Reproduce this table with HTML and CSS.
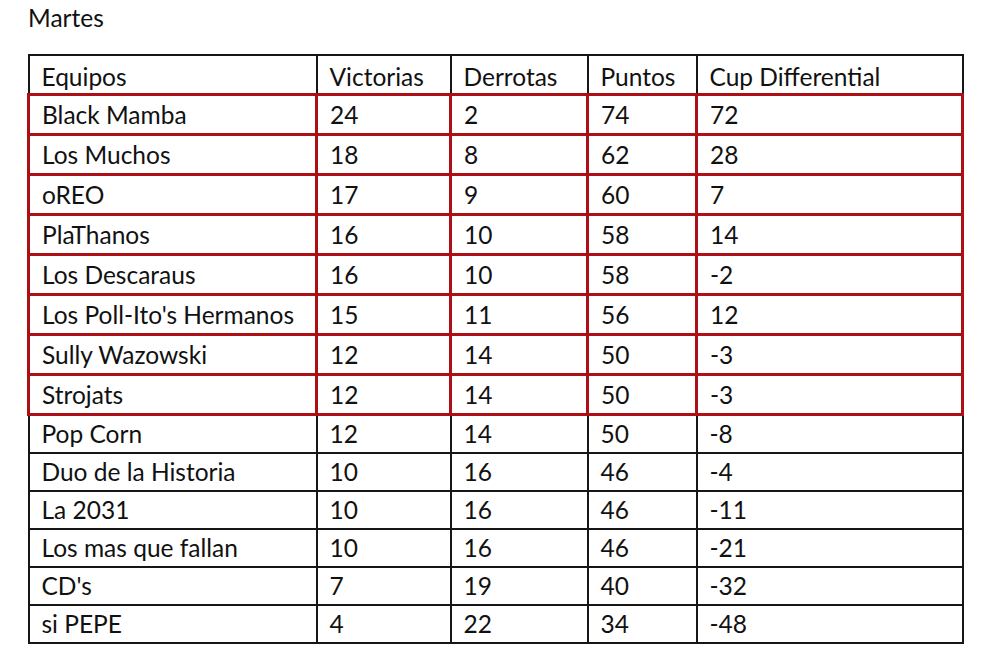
FILE: index.html
```html
<!DOCTYPE html>
<html lang="es">
<head>
<meta charset="utf-8">
<title>Martes</title>
<link rel="stylesheet" href="styles.css">
</head>
<body>
<div class="page">
  <div class="title">Martes</div>
  <table class="standings">
    <colgroup>
      <col class="c-team"><col class="c-win"><col class="c-loss"><col class="c-pts"><col class="c-diff">
    </colgroup>
    <thead>
      <tr class="head"><td>Equipos</td><td>Victorias</td><td>Derrotas</td><td>Puntos</td><td>Cup Differential</td></tr>
    </thead>
    <tbody>
      <tr class="top"><td>Black Mamba</td><td>24</td><td>2</td><td>74</td><td>72</td></tr>
      <tr class="top"><td>Los Muchos</td><td>18</td><td>8</td><td>62</td><td>28</td></tr>
      <tr class="top"><td>oREO</td><td>17</td><td>9</td><td>60</td><td>7</td></tr>
      <tr class="top"><td>PlaThanos</td><td>16</td><td>10</td><td>58</td><td>14</td></tr>
      <tr class="top"><td>Los Descaraus</td><td>16</td><td>10</td><td>58</td><td>-2</td></tr>
      <tr class="top"><td>Los Poll-Ito's Hermanos</td><td>15</td><td>11</td><td>56</td><td>12</td></tr>
      <tr class="top"><td>Sully Wazowski</td><td>12</td><td>14</td><td>50</td><td>-3</td></tr>
      <tr class="top"><td>Strojats</td><td>12</td><td>14</td><td>50</td><td>-3</td></tr>
      <tr class="rest"><td>Pop Corn</td><td>12</td><td>14</td><td>50</td><td>-8</td></tr>
      <tr class="rest"><td>Duo de la Historia</td><td>10</td><td>16</td><td>46</td><td>-4</td></tr>
      <tr class="rest"><td>La 2031</td><td>10</td><td>16</td><td>46</td><td>-11</td></tr>
      <tr class="rest"><td>Los mas que fallan</td><td>10</td><td>16</td><td>46</td><td>-21</td></tr>
      <tr class="rest"><td>CD's</td><td>7</td><td>19</td><td>40</td><td>-32</td></tr>
      <tr class="rest"><td>si PEPE</td><td>4</td><td>22</td><td>34</td><td>-48</td></tr>
    </tbody>
  </table>
</div>
</body>
</html>
```
FILE: styles.css
```css
html, body {
  margin: 0;
  padding: 0;
  background: #ffffff;
}
body {
  font-family: Lato, "Open Sans", "Liberation Sans", sans-serif;
  font-size: 24.5px;
  color: #111111;
}
.page {
  padding: 4px 20px 0 27px;
}
.title {
  line-height: 28px;
  height: 50px;
  padding-left: 1px;
}
.standings {
  border-collapse: collapse;
  table-layout: fixed;
  width: 934px;
}
.c-team { width: 288px; }
.c-win { width: 134px; }
.c-loss { width: 137px; }
.c-pts { width: 109px; }
.c-diff { width: 266px; }
.standings td {
  border: 2px solid #161616;
  padding: 0 12px;
  vertical-align: middle;
  line-height: 26px;
  white-space: nowrap;
}
.head td {
  height: 33px;
  padding-top: 4px;
}
.top td {
  border: 3px solid #ad0f16;
  height: 36px;
  padding-top: 1px;
}
.rest td { height: 36px; }
```
